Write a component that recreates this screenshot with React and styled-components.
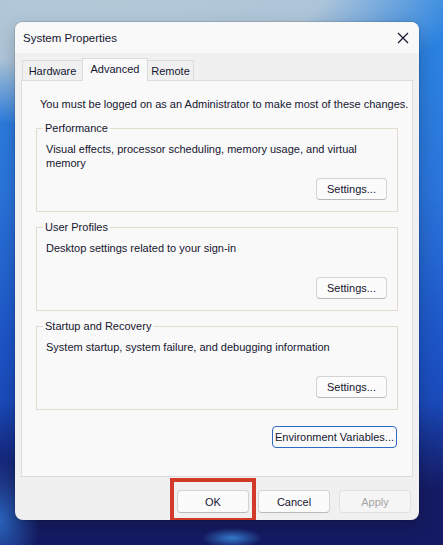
import React from 'react'
import styled, { createGlobalStyle } from 'styled-components'

const GlobalStyle = createGlobalStyle`
  html, body {
    margin: 0;
    padding: 0;
  }
  body {
    font-family: "Liberation Sans", Arial, sans-serif;
    font-size: 11px;
    color: #161630;
  }
`

const groups = [
  {
    key: 'perf',
    label: 'Performance',
    text: ['Visual effects, processor scheduling, memory usage, and virtual', 'memory'],
  },
  { key: 'profiles', label: 'User Profiles', text: ['Desktop settings related to your sign-in'] },
  {
    key: 'startup',
    label: 'Startup and Recovery',
    text: ['System startup, system failure, and debugging information'],
  },
]

const tabs = [
  { key: 'hw', label: 'Hardware', width: 61 },
  { key: 'adv', label: 'Advanced', width: 66, active: true },
  { key: 'remote', label: 'Remote', width: 47 },
]

const CloseIcon = () => (
  <svg width="12" height="12" viewBox="0 0 12 12">
    <path d="M1 1 L11 11 M11 1 L1 11" stroke="#161630" strokeWidth="1.2" fill="none" />
  </svg>
)

const App = () => (
  <>
    <GlobalStyle />
    <Desktop>
      <Window>
        <TitleBar>
          <Title>System Properties</Title>
          <CloseButton>
            <CloseIcon />
          </CloseButton>
        </TitleBar>
        <Body>
          <TabStrip>
            {tabs.map(t => (
              <Tab key={t.key} $active={t.active} $w={t.width}>
                {t.label}
              </Tab>
            ))}
          </TabStrip>
          <Panel>
            <Notice>You must be logged on as an Administrator to make most of these changes.</Notice>
            {groups.map(g => (
              <Group key={g.key}>
                <Legend>{g.label}</Legend>
                <Description>
                  {g.text.map(line => (
                    <Line key={line}>{line}</Line>
                  ))}
                </Description>
                <ButtonLine>
                  <Button $w={71} $h={22}>Settings...</Button>
                </ButtonLine>
              </Group>
            ))}
            <EnvLine>
              <Button $w={125} $h={22} $focused>
                Environment Variables...
              </Button>
            </EnvLine>
          </Panel>
          <Footer>
            <Highlighted>
              <Button $w={72} $h={23}>OK</Button>
              <Marker />
            </Highlighted>
            <Button $w={72} $h={23}>Cancel</Button>
            <Button $w={72} $h={23} disabled>
              Apply
            </Button>
          </Footer>
        </Body>
      </Window>
    </Desktop>
  </>
)

export default App

const Desktop = styled.div`
  width: 443px;
  height: 545px;
  box-sizing: border-box;
  overflow: hidden;
  padding: 22px 24px 25px 15px;
  background:
    radial-gradient(ellipse 30px 10px at 232px 538px, rgba(63, 147, 234, 0.8) 0%, rgba(63, 147, 234, 0) 100%),
    radial-gradient(ellipse 40px 60px at 0px 520px, rgba(50, 130, 225, 0.7) 0%, rgba(50, 130, 225, 0) 100%),
    radial-gradient(ellipse 360px 150px at 110px -20px, #b6cad8 0%, #aec5d8 60%, rgba(174, 197, 216, 0) 100%),
    linear-gradient(180deg, rgba(20, 27, 99, 0) 74%, #151b63 90%),
    linear-gradient(180deg, #2c86e2 0%, #2a74da 35%, #1c52c4 65%, #143399 100%);
`

const Window = styled.div`
  width: 404px;
  height: 498px;
  display: flex;
  flex-direction: column;
  background: #f0f0f0;
  border-radius: 8px;
  overflow: hidden;
  box-shadow: 0 0 0 1px rgba(0, 0, 0, 0.1), 0 6px 18px rgba(0, 0, 0, 0.22);
`

const TitleBar = styled.div`
  height: 31px;
  display: flex;
  align-items: center;
  justify-content: space-between;
  padding: 0 9px 0 8px;
  background: #f9f9f9;
`

const Title = styled.span`
  font-size: 11.5px;
`

const CloseButton = styled.div`
  width: 12px;
  height: 12px;
  display: flex;
  margin-right: 1px;
`

const Body = styled.div`
  flex: 1;
  display: flex;
  flex-direction: column;
  padding: 5px 6px 7px;
`

const TabStrip = styled.div`
  height: 22px;
  display: flex;
  align-items: flex-end;
  padding-left: 1px;
  position: relative;
  z-index: 1;
`

const Tab = styled.div`
  box-sizing: border-box;
  width: ${p => p.$w}px;
  height: ${p => (p.$active ? 23 : 20)}px;
  margin-bottom: ${p => (p.$active ? -1 : 0)}px;
  padding-bottom: ${p => (p.$active ? 3 : 0)}px;
  display: flex;
  align-items: center;
  justify-content: center;
  border: 1px solid #dcdcdc;
  border-bottom: none;
  background: ${p => (p.$active ? '#f9f9f9' : '#f0f0f0')};
  margin-left: -1px;
  &:first-child {
    margin-left: 0;
  }
`

const Panel = styled.div`
  flex: 1;
  display: flex;
  flex-direction: column;
  padding: 16px 14px 0;
  border: 1px solid #dcdcdc;
  background: #f9f9f9;
`

const Notice = styled.div`
  line-height: 14px;
  margin: 0 0 10px 4px;
  white-space: nowrap;
`

const Group = styled.fieldset`
  margin: 0 0 8px;
  padding: 0 10px 11px 6px;
  border: 1px solid #e2dccf;
  min-width: 0;
  &:last-of-type {
    margin-bottom: 0;
  }
`

const Legend = styled.legend`
  padding: 0 2px;
  line-height: 14px;
`

const Description = styled.div`
  height: 28px;
  margin: 7px 0 8px 3px;
  line-height: 14px;
`

const Line = styled.div`
  white-space: nowrap;
`

const ButtonLine = styled.div`
  display: flex;
  justify-content: flex-end;
`

const EnvLine = styled.div`
  display: flex;
  justify-content: flex-end;
  margin: 16px 1px 0 0;
`

const Button = styled.button`
  box-sizing: border-box;
  width: ${p => p.$w}px;
  height: ${p => p.$h}px;
  padding: 0;
  font: inherit;
  font-size: 11px;
  white-space: nowrap;
  color: #161630;
  background: #fbfbfb;
  border: 1px solid ${p => (p.$focused ? '#2c6ac4' : '#d3d3d3')};
  border-bottom-color: ${p => (p.$focused ? '#2c6ac4' : '#b9b9b9')};
  border-radius: 4px;
  &:disabled {
    color: #a5a5a5;
    background: #f5f5f5;
    border-color: #e0e0e0;
  }
`

const Footer = styled.div`
  display: flex;
  justify-content: flex-end;
  gap: 9px;
  margin: 13px 2px 0 0;
`

const Highlighted = styled.div`
  position: relative;
  display: flex;
`

const Marker = styled.div`
  position: absolute;
  left: -7px;
  top: -12px;
  right: -7px;
  bottom: -9px;
  border: 4px solid #d3392a;
  pointer-events: none;
`
